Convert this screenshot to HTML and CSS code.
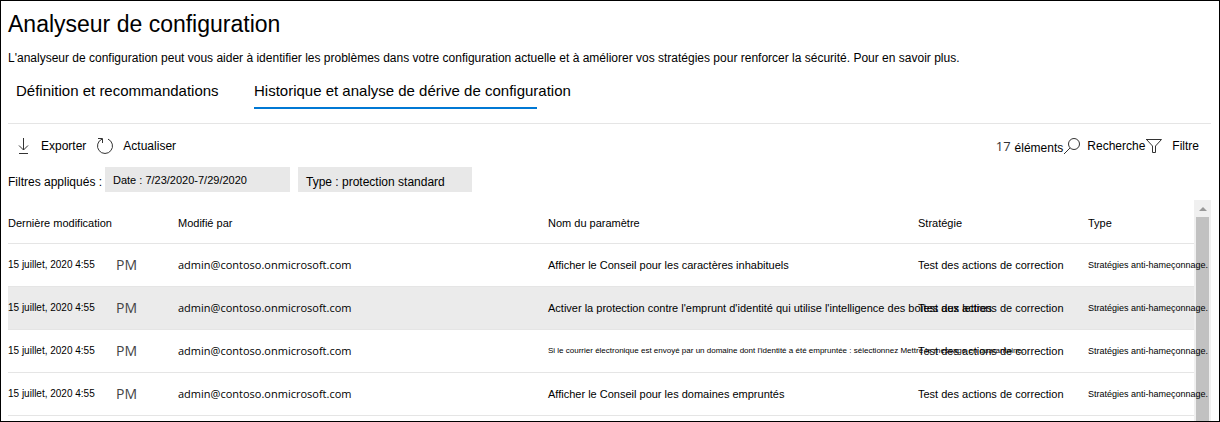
FILE: index.html
```html
<!DOCTYPE html>
<html lang="fr">
<head>
<meta charset="utf-8">
<title>Analyseur de configuration</title>
<link rel="stylesheet" href="styles.css">
</head>
<body>
<main class="page">
  <h1 class="title">Analyseur de configuration</h1>
  <p class="intro">L'analyseur de configuration peut vous aider à identifier les problèmes dans votre configuration actuelle et à améliorer vos stratégies pour renforcer la sécurité. Pour en savoir plus.</p>
  <nav class="tabs">
    <button class="tab" type="button">Définition et recommandations</button>
    <button class="tab tab-active" type="button">Historique et analyse de dérive de configuration</button>
  </nav>
  <div class="toolbar">
    <button class="tool" type="button">
      <svg class="icon" width="16" height="18" viewBox="0 0 16 18" fill="none" stroke="#333"><path d="M7.500 1V13M3 8.500L7.500 13L12 8.500M3 16.500H12"/></svg>
      Exporter
    </button>
    <button class="tool" type="button">
      <svg class="icon" width="18" height="18" viewBox="0 0 18 18" fill="none" stroke="#333"><path d="M12 2.100A7.500 7.500 0 1 1 6 2.100M2 1.500H6.500V6"/></svg>
      Actualiser
    </button>
    <span class="count"><span class="count-number">17</span><span class="count-label">éléments</span></span>
    <button class="tool tool-search" type="button">
      <svg class="icon" width="17" height="18" viewBox="0 0 17 18" fill="none" stroke="#333"><circle cx="11" cy="7" r="5.500"/><path d="M7 11L1 17"/></svg>
      Recherche
    </button>
    <button class="tool" type="button">
      <svg class="icon" width="18" height="18" viewBox="0 0 18 18" fill="none" stroke="#333"><path d="M1 2.500H16.500L10.500 9V15.500H7.500V9L1.500 2.500"/></svg>
      Filtre
    </button>
  </div>
  <div class="filters">
    <span class="filters-label">Filtres appliqués :</span>
    <button class="chip chip-date" type="button">Date : 7/23/2020-7/29/2020</button>
    <button class="chip chip-type" type="button">Type : protection standard</button>
  </div>
  <div class="list">
    <table class="grid">
      <colgroup><col class="col-date"><col class="col-user"><col class="col-name"><col class="col-policy"><col class="col-type"></colgroup>
      <thead>
        <tr><th>Dernière modification</th><th>Modifié par</th><th>Nom du paramètre</th><th>Stratégie</th><th>Type</th></tr>
      </thead>
      <tbody>
        <tr><td><div class="stamp"><span>15 juillet, 2020 4:55</span><span class="period">PM</span></div></td><td class="user">admin@contoso.onmicrosoft.com</td><td>Afficher le Conseil pour les caractères inhabituels</td><td>Test des actions de correction</td><td class="type">Stratégies anti-hameçonnage.</td></tr>
        <tr class="selected"><td><div class="stamp"><span>15 juillet, 2020 4:55</span><span class="period">PM</span></div></td><td class="user">admin@contoso.onmicrosoft.com</td><td>Activer la protection contre l'emprunt d'identité qui utilise l'intelligence des boîtes aux lettres</td><td>Test des actions de correction</td><td class="type">Stratégies anti-hameçonnage.</td></tr>
        <tr><td><div class="stamp"><span>15 juillet, 2020 4:55</span><span class="period">PM</span></div></td><td class="user">admin@contoso.onmicrosoft.com</td><td class="small">Si le courrier électronique est envoyé par un domaine dont l'identité a été empruntée : sélectionnez Mettre le message en quarantaine.</td><td>Test des actions de correction</td><td class="type">Stratégies anti-hameçonnage.</td></tr>
        <tr><td><div class="stamp"><span>15 juillet, 2020 4:55</span><span class="period">PM</span></div></td><td class="user">admin@contoso.onmicrosoft.com</td><td>Afficher le Conseil pour les domaines empruntés</td><td>Test des actions de correction</td><td class="type">Stratégies anti-hameçonnage.</td></tr>
      </tbody>
    </table>
    <div class="scrollbar"><span class="scroll-arrow"></span><span class="scroll-thumb"></span></div>
  </div>
</main>
</body>
</html>
```
FILE: styles.css
```css
* { box-sizing: border-box; }

body {
  margin: 0;
  font-family: "Liberation Sans", Arial, sans-serif;
  font-size: 12px;
  color: #000;
  background: #fff;
}

button {
  font: inherit;
  color: inherit;
  border: 0;
  padding: 0;
  background: none;
  white-space: nowrap;
}

.page {
  display: flex;
  flex-direction: column;
  height: 100vh;
  overflow: hidden;
  border: 1px solid #000;
  padding: 7px 8px 0 7px;
}

.title {
  margin: 0;
  font-size: 23px;
  line-height: 32px;
  font-weight: 400;
}

.intro {
  margin: 8px 0 0;
  line-height: 20px;
  white-space: nowrap;
}

.tabs {
  display: flex;
  gap: 40px;
  padding: 8px 8px 14px;
  border-bottom: 1px solid #e5e5e5;
}

.tab {
  height: 33px;
  padding-bottom: 4px;
  font-size: 15px;
  text-align: left;
}

/* The underline is shorter than the label it belongs to. */
.tab-active {
  background: linear-gradient(#0078d4, #0078d4) left bottom / 283px 2px no-repeat;
}

.tab:first-child { width: 198px; }

.toolbar {
  display: flex;
  align-items: center;
  height: 43px;
  padding: 0 12px 0 8px;
  gap: 10px;
}

.tool {
  display: flex;
  align-items: center;
  gap: 9px;
}

.tool-search {
  gap: 7px;
  margin-right: -10px;
}

.icon { flex: none; }

.count {
  display: flex;
  align-items: center;
  gap: 4px;
  margin: 0 -10px 0 auto;
}

.count-number {
  font-family: "Open Sans", sans-serif;
  font-size: 13px;
  color: #333;
}

.count-label { padding-top: 4px; }

.filters {
  display: flex;
  gap: 8px;
  height: 24px;
}

.filters-label {
  width: 89px;
  padding-top: 8px;
  white-space: nowrap;
}

.chip {
  height: 25px;
  padding: 0 8px;
  text-align: left;
  background: #e8e8e8;
}

.chip-date {
  width: 185px;
  font-size: 11px;
}

.chip-type {
  width: 174px;
  padding-top: 4px;
}

.list {
  display: flex;
  flex: 1;
  min-height: 0;
  margin-top: 9px;
}

.grid {
  z-index: 1;
  flex: 1;
  width: 0;
  height: 0;
  table-layout: fixed;
  border-collapse: collapse;
  font-size: 11px;
}

.col-date { width: 170px; }
.col-user { width: 370px; }
.col-name { width: 370px; }
.col-policy { width: 170px; }

th,
td {
  height: 43px;
  padding: 0;
  text-align: left;
  font-weight: 400;
  white-space: nowrap;
  border-bottom: 1px solid #e5e5e5;
}

th { padding-top: 3px; }

.stamp {
  display: flex;
  align-items: center;
  font-size: 10px;
}

.stamp > :first-child { width: 108px; }

.period {
  font-family: "Open Sans", sans-serif;
  font-size: 14px;
  font-weight: 500;
  color: #444;
}

.user {
  font-family: "Open Sans", sans-serif;
  font-size: 11px;
}

.type { font-size: 9px; }

.small { font-size: 8px; }

.selected { background: #ebebeb; }

.scrollbar {
  display: flex;
  flex-direction: column;
  width: 17px;
  padding: 0 2px;
  background: #f0f0f0;
}

.scroll-arrow {
  align-self: center;
  margin: 7px 0 6px;
  border: 4px solid transparent;
  border-top: 0;
  border-bottom-color: #999;
}

.scroll-thumb {
  flex: 1;
  background: #c1c1c1;
}
```
